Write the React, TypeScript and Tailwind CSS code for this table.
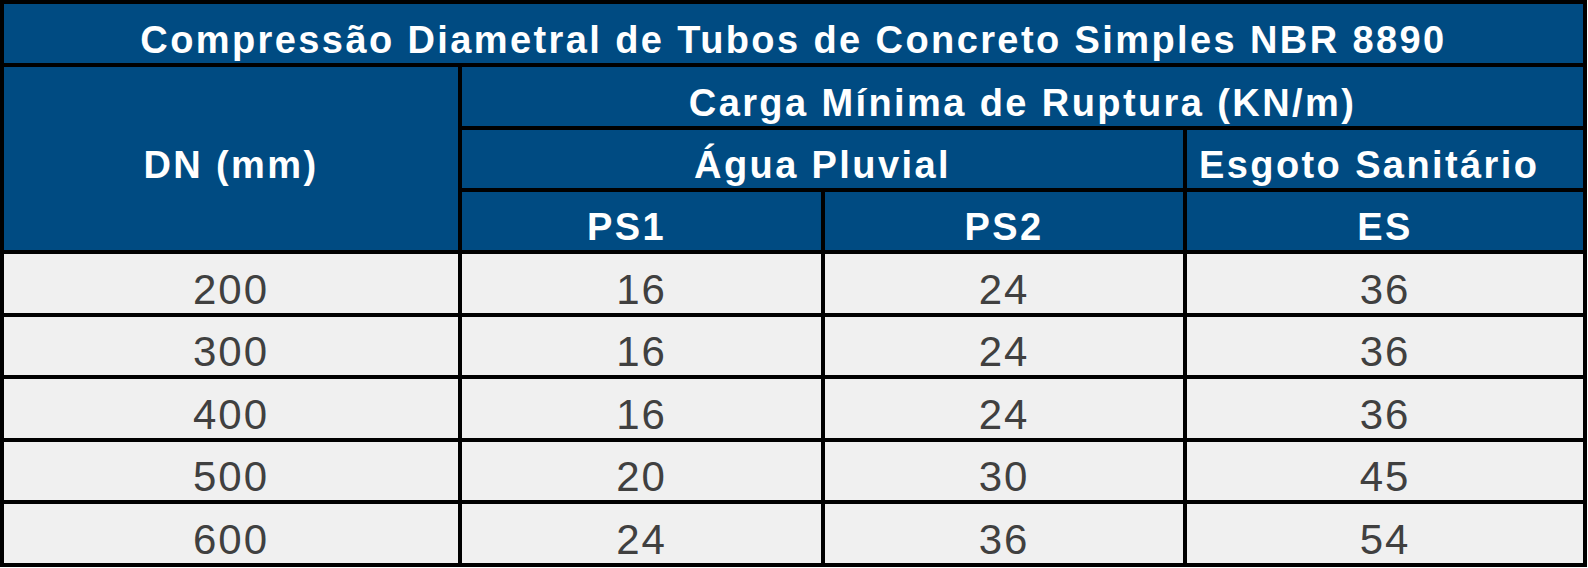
const rows = [
  { dn: '200', ps1: '16', ps2: '24', es: '36' },
  { dn: '300', ps1: '16', ps2: '24', es: '36' },
  { dn: '400', ps1: '16', ps2: '24', es: '36' },
  { dn: '500', ps1: '20', ps2: '30', es: '45' },
  { dn: '600', ps1: '24', ps2: '36', es: '54' },
];

const head = 'bg-[#004b82] text-white font-bold text-[38px] tracking-[2.4px] leading-none flex items-center justify-center pt-[12px]';
const cell = 'bg-[#f0f0f0] text-[#404040] text-[42px] tracking-[2px] leading-none flex items-center justify-center pt-[13px]';

export default function App() {
  return (
    <div className="bg-white min-h-[568px]" style={{ fontFamily: '"Liberation Sans", Arial, sans-serif' }}>
      <div className="w-[1587px] bg-black p-[4px] grid gap-[4px] grid-cols-[454px_359px_358px_396px] grid-rows-[59px_59px_58px_58px_repeat(5,58.5px)]">
        <div className={`${head} col-span-4`}>Compressão Diametral de Tubos de Concreto Simples NBR 8890</div>

        <div className={`${head} row-span-3`}>DN (mm)</div>
        <div className={`${head} col-span-3`}>Carga Mínima de Ruptura (KN/m)</div>

        <div className={`${head} col-span-2`}>Água Pluvial</div>
        <div className={`${head} !justify-start pl-[12px]`}>Esgoto Sanitário</div>

        <div className={`${head} pr-[30px]`}>PS1</div>
        <div className={head}>PS2</div>
        <div className={head}>ES</div>

        {rows.map((r) => (
          <div key={r.dn} className="contents">
            <div className={cell}>{r.dn}</div>
            <div className={cell}>{r.ps1}</div>
            <div className={cell}>{r.ps2}</div>
            <div className={cell}>{r.es}</div>
          </div>
        ))}
      </div>
    </div>
  );
}
